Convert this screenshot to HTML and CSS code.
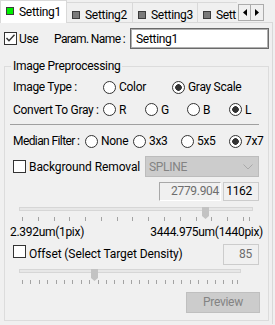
FILE: index.html
```html
<!DOCTYPE html>
<html>
<head>
<meta charset="utf-8">
<link rel="stylesheet" href="styles.css">
</head>
<body>
<div class="tabbar">
  <div class="tabs">
    <div class="tab sel"><span class="sq green"></span>Setting1</div>
    <div class="tab t2"><span class="sq"></span>Setting2</div>
    <div class="tab t3"><span class="sq"></span>Setting3</div>
    <div class="tab t4"><span class="sq"></span>Sett</div>
  </div>
  <div class="arrows">
    <span class="arr"><svg width="4" height="7" viewBox="0 0 4 7"><polygon points="4,0 4,7 0,3.5" fill="#000"/></svg></span>
    <span class="arr"><svg width="4" height="7" viewBox="0 0 4 7"><polygon points="0,0 0,7 4,3.5" fill="#000"/></svg></span>
  </div>
</div>
<div class="panel">
  <div class="namerow">
    <span class="cb"><svg width="11" height="11" viewBox="0 0 11 11"><polyline points="1.5,5 4,7.8 9.5,1.8" fill="none" stroke="#333" stroke-width="1.4"/></svg></span>
    <span class="use">Use</span>
    <span class="plabel">Param. Name :</span>
    <div class="textbox">Setting1</div>
  </div>
  <fieldset class="group">
    <legend>Image Preprocessing</legend>
    <div class="row r1">
      <span class="lbl w90">Image Type :</span>
      <span class="opt w69"><span class="radio"></span>Color</span>
      <span class="opt"><span class="radio on"></span>Gray Scale</span>
    </div>
    <div class="row r2">
      <span class="lbl w90">Convert To Gray :</span>
      <span class="opt w42"><span class="radio"></span>R</span>
      <span class="opt w42"><span class="radio"></span>G</span>
      <span class="opt w42"><span class="radio"></span>B</span>
      <span class="opt"><span class="radio on"></span>L</span>
    </div>
    <div class="sep"></div>
    <div class="row r3">
      <span class="lbl w72 tight">Median Filter :</span>
      <span class="opt w48"><span class="radio"></span>None</span>
      <span class="opt w48"><span class="radio"></span>3x3</span>
      <span class="opt w48"><span class="radio"></span>5x5</span>
      <span class="opt"><span class="radio on"></span>7x7</span>
    </div>
    <div class="row r4">
      <span class="cb plain"></span><span class="cbtext">Background Removal</span>
      <div class="combo"><span>SPLINE</span><svg width="10" height="6" viewBox="0 0 10 6"><polyline points="0.5,0.5 5,5 9.5,0.5" fill="none" stroke="#a9a9a9" stroke-width="1"/></svg></div>
    </div>
    <div class="row r5">
      <div class="numbox sunken">2779.904</div>
      <div class="numbox flat">1162</div>
    </div>
    <div class="slider s1">
      <div class="track"></div>
      <svg class="thumb" width="7" height="12" viewBox="0 0 7 12"><polygon points="0,0 7,0 7,9 3.5,12 0,9" fill="#c3c3c3"/></svg>
      <div class="ticks">
        <div class="tickset">
          <i></i><i></i><i></i><i></i><i></i><i></i><i></i><i></i><i></i><i></i><i></i><i></i><i></i><i></i><i></i>
        </div>
        <i class="endtick"></i>
      </div>
    </div>
    <div class="range">
      <span>2.392um(1pix)</span>
      <span>3444.975um(1440pix)</span>
    </div>
    <div class="row r6">
      <span class="cb plain"></span><span class="cbtext">Offset (Select Target Density)</span>
      <div class="numbox flat tall">85</div>
    </div>
    <div class="slider s2">
      <div class="track"></div>
      <svg class="thumb" width="7" height="12" viewBox="0 0 7 12"><polygon points="0,0 7,0 7,9 3.5,12 0,9" fill="#c3c3c3"/></svg>
      <div class="ticks">
        <div class="tickset">
          <i></i><i></i><i></i><i></i><i></i><i></i><i></i><i></i><i></i><i></i><i></i><i></i><i></i><i></i><i></i><i></i><i></i><i></i><i></i><i></i><i></i><i></i><i></i><i></i><i></i><i></i>
        </div>
        <i class="endtick"></i>
      </div>
    </div>
    <div class="btnrow"><div class="btn">Preview</div></div>
  </fieldset>
</div>
</body>
</html>
```
FILE: styles.css
```css
* { box-sizing: border-box; }
body {
  margin: 0;
  width: 275px;
  height: 325px;
  overflow: hidden;
  background: #f0f0f0;
  font-family: Roboto, "Liberation Sans", sans-serif;
  font-size: 12px;
  letter-spacing: -0.3px;
  line-height: 14px;
  color: #000;
}
.tabbar { display: flex; height: 23px; margin-bottom: -1px; }
.tabs { display: flex; width: 237px; overflow: hidden; align-items: flex-start; flex: none; }
.tab {
  flex: none;
  display: flex;
  align-items: center;
  height: 20px;
  margin-top: 2px;
  padding: 5px 0 0 5px;
  border: 1px solid #d9d9d9;
  border-left: none;
  border-bottom: none;
  white-space: nowrap;
}
.tab.sel {
  width: 67px;
  height: 23px;
  margin-top: 0;
  padding-top: 0;
  border-left: 1px solid #d9d9d9;
  background: #fff;
  position: relative;
  z-index: 1;
}
.t2 { width: 66px; }
.t3 { width: 65px; }
.t4 { width: 60px; letter-spacing: -0.4px; }
.sq {
  width: 8px;
  height: 8px;
  margin-right: 5px;
  border: 1px solid #3c3c3c;
  background: #7a7a7a;
  flex: none;
}
.sq.green { background: #00f000; margin-top: -2px; }
.arrows { display: flex; margin: 4px 0 0 1px; height: 17px; flex: none; }
.arr {
  width: 13px;
  height: 17px;
  border: 1px solid #acacac;
  background: #f0f0f0;
  display: flex;
  align-items: center;
  justify-content: center;
}
.arr + .arr { border-left: none; }
.panel {
  width: 273px;
  height: 302px;
  border-top: 1px solid #d9d9d9;
  border-right: 1px solid #d9d9d9;
}
.namerow { display: flex; align-items: center; margin-top: 5px; height: 21px; }
.cb {
  width: 13px;
  height: 13px;
  border: 1px solid #333;
  background: #fff;
  flex: none;
  display: flex;
  align-items: center;
  justify-content: center;
}
.namerow .cb { margin-left: 4px; }
.use { width: 37px; padding-left: 2px; }
.plabel { width: 76px; letter-spacing: -0.6px; }
.textbox {
  width: 139px;
  height: 21px;
  border: 1px solid #6a6a6a;
  box-shadow: inset 0 0 0 1px #b0b0b0;
  background: #fff;
  padding: 3px 0 0 5px;
}
.group {
  margin: 10px 0 0 4px;
  padding: 0 9px 7px 8px;
  border: 1px solid #dcdcdc;
  width: 265px;
  min-width: 0;
}
.group legend { padding: 0 2px; margin-left: -2px; line-height: 14px; }
.row { display: flex; align-items: center; }
.r1 { margin-top: 4px; height: 20px; }
.r2 { margin-top: 2px; height: 21px; }
.sep { margin: 4px 0 0 -3px; width: 249px; height: 1px; background: #a0a0a0; }
.r3 { margin-top: 6px; height: 20px; }
.r4 { margin-top: 5px; height: 21px; }
.r5 { margin-top: 5px; height: 19px; justify-content: flex-end; }
.lbl { flex: none; }
.tight { letter-spacing: -0.6px; }
.w90 { width: 90px; }
.w72 { width: 72px; }
.opt { display: flex; align-items: center; flex: none; }
.w69 { width: 69px; }
.w42 { width: 42px; }
.w48 { width: 48px; }
.radio {
  width: 13px;
  height: 13px;
  border: 1px solid #333;
  border-radius: 50%;
  background: #fff;
  margin-right: 3px;
  flex: none;
}
.radio.on { background: radial-gradient(circle, #333 3px, #fff 3.6px); }
.cbtext { margin-left: 3px; }
.r4 .cbtext, .r6 .cbtext { letter-spacing: -0.1px; }
.combo {
  margin-left: auto;
  width: 114px;
  height: 21px;
  background: #cccccc;
  border: 1px solid #bcbcbc;
  color: #838383;
  display: flex;
  align-items: center;
  justify-content: space-between;
  padding: 0 5px 0 3px;
}
.numbox {
  height: 19px;
  line-height: 17px;
  text-align: right;
  background: #f0f0f0;
}
.sunken {
  width: 62px;
  padding-right: 1px;
  color: #6d6d6d;
  border: 1px solid;
  border-color: #a8a8a8 #ffffff #ffffff #a8a8a8;
}
.flat {
  width: 36px;
  margin-left: 2px;
  padding-right: 6px;
  border: 1px solid #cccccc;
}
.flat.tall { height: 21px; line-height: 19px; color: #6d6d6d; margin-left: auto; }
.slider { position: relative; }
.s1 { margin-top: 6px; height: 17px; }
.s2 { margin-top: 4px; height: 18px; }
.track {
  margin: 3px 0 0 6px;
  height: 4px;
  background: #e7e7e7;
  border: 1px solid #d6d6d6;
}
.s1 .track { width: 234px; }
.s2 .track { width: 222px; }
.thumb { position: absolute; top: 0; }
.s1 .thumb { left: 189px; }
.s2 .thumb { left: 78px; }
.ticks { display: flex; margin-left: 9px; height: 4px; }
.s1 .ticks { margin-top: 6px; }
.s2 .ticks { margin-top: 7px; }
.tickset { display: flex; justify-content: space-between; height: 4px; }
.s1 .tickset { width: 222px; }
.s2 .tickset { width: 211px; }
.tickset i, .endtick { display: block; width: 1px; height: 4px; background: #a3a3a3; }
.s1 .endtick { margin-left: 5px; }
.s2 .endtick { margin-left: 4px; }
.range {
  display: flex;
  justify-content: space-between;
  margin: 1px -4px 0 -3px;
  height: 14px;
}
.r6 { margin-top: 5px; height: 21px; align-items: flex-start; }
.r6 .cb { margin-top: 1px; }
.r6 .cbtext { margin-top: 3px; }
.btnrow { display: flex; justify-content: flex-end; margin-top: 5px; }
.btn {
  width: 74px;
  height: 21px;
  background: #cccccc;
  border: 1px solid #bfbfbf;
  color: #838383;
  text-align: center;
  line-height: 19px;
  margin-right: -1px;
}
```
